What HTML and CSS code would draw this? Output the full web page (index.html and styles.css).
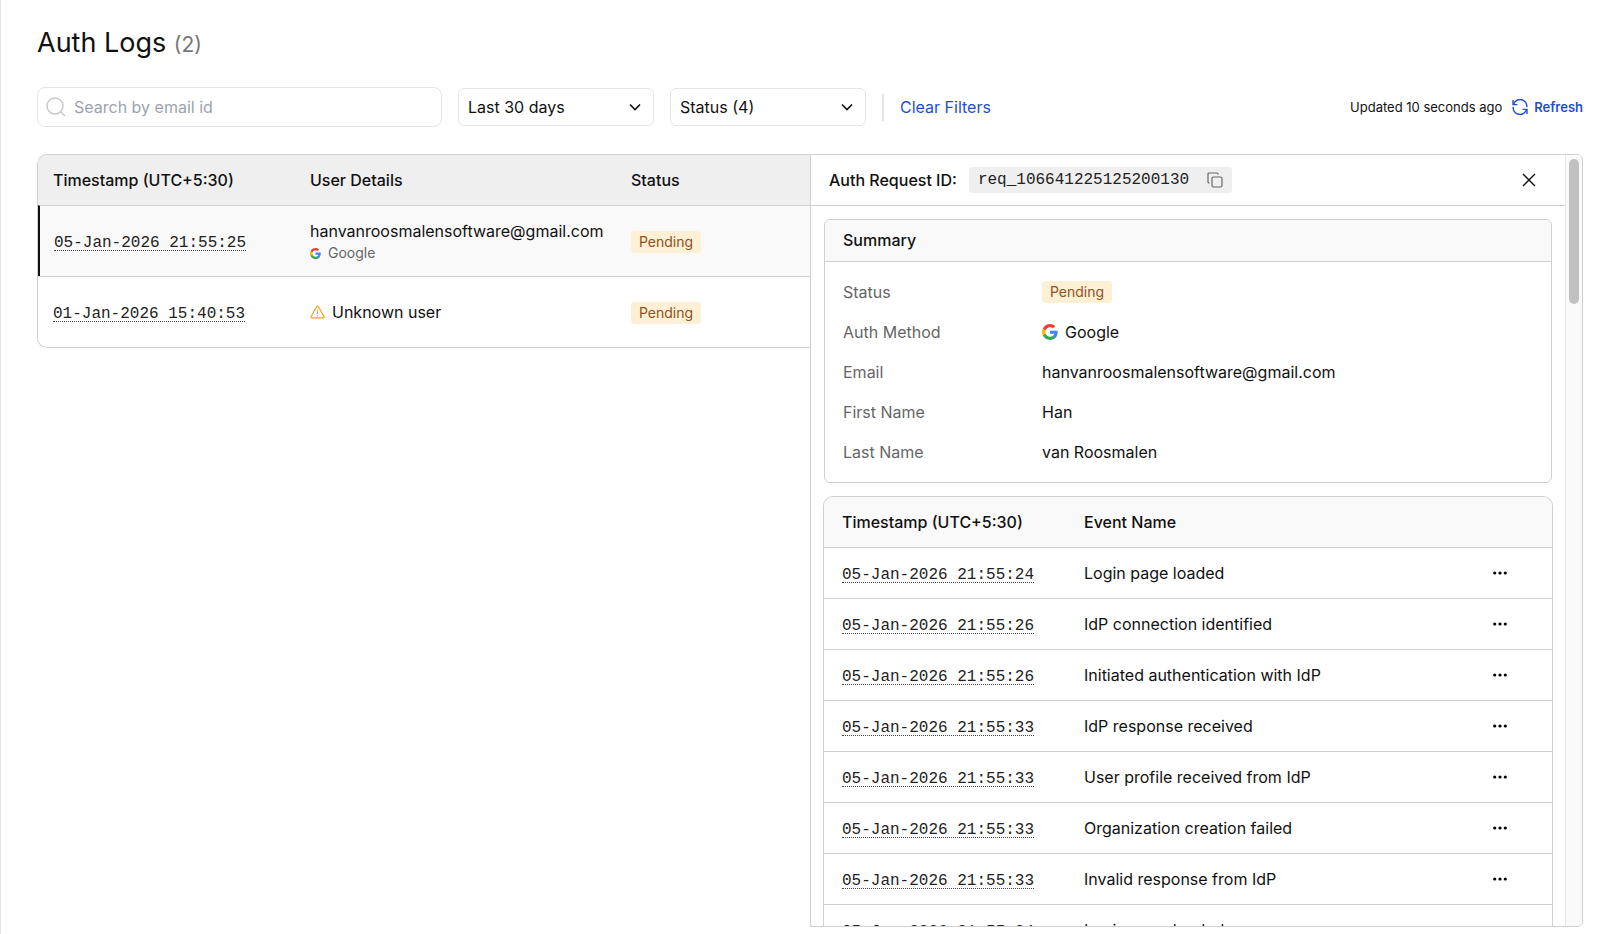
FILE: index.html
```html
<!DOCTYPE html>
<html lang="en">
<head>
    <meta charset="UTF-8">
    <meta name="viewport" content="width=device-width, initial-scale=1.0">
    <title>Auth Logs</title>
    <link rel="stylesheet" href="styles.css">
</head>
<body>
    <!-- shared icons -->
    <svg class="sprite" aria-hidden="true">
        <symbol id="icon-google" viewBox="0 0 48 48">
            <path fill="#4285f4" d="M47 24.500c0-1.600-.1-3.100-.4-4.500H24v9h12.900c-.6 3-2.300 5.500-4.800 7.200v6h7.700C44.300 38 47 31.800 47 24.500z"/>
            <path fill="#34a853" d="M24 48c6.500 0 11.900-2.100 15.900-5.800l-7.800-6c-2.100 1.400-4.900 2.300-8.100 2.300-6.200 0-11.500-4.200-13.400-9.900h-8v6.200C6.600 42.600 14.600 48 24 48z"/>
            <path fill="#fbbc05" d="M10.600 28.600c-.5-1.400-.8-3-.8-4.600s.3-3.200.8-4.600v-6.200h-8C1 16.500 0 20.100 0 24s1 7.500 2.600 10.800z"/>
            <path fill="#ea4335" d="M24 9.500c3.500 0 6.700 1.200 9.200 3.600l6.800-6.800C35.900 2.400 30.500 0 24 0 14.600 0 6.600 5.400 2.600 13.200l8 6.200C12.500 13.700 17.800 9.500 24 9.500z"/>
        </symbol>
        <symbol id="icon-chevron" viewBox="0 0 12 8">
            <path d="M1 1.500l5 5 5-5" fill="none" stroke="currentColor" stroke-width="1.600"/>
        </symbol>
        <symbol id="icon-dots" viewBox="0 0 16 4">
            <circle cx="2.700" cy="2" r="1.600"/><circle cx="8" cy="2" r="1.600"/><circle cx="13.300" cy="2" r="1.600"/>
        </symbol>
    </svg>

    <header class="page-header">
        <h1>Auth Logs <span class="count">(2)</span></h1>
    </header>

    <div class="toolbar">
        <label class="search">
            <svg class="search-icon" viewBox="0 0 20 20" aria-hidden="true"><circle cx="9" cy="9" r="8"/><path d="M15 15l4 4"/></svg>
            <input type="text" placeholder="Search by email id" aria-label="Search by email id">
        </label>
        <div class="select">
            <select aria-label="Date range"><option>Last 30 days</option></select>
            <svg class="chevron" aria-hidden="true"><use href="#icon-chevron"/></svg>
        </div>
        <div class="select">
            <select aria-label="Status"><option>Status (4)</option></select>
            <svg class="chevron" aria-hidden="true"><use href="#icon-chevron"/></svg>
        </div>
        <span class="divider"></span>
        <button class="clear-btn" type="button">Clear Filters</button>
        <div class="updated">
            <span>Updated 10 seconds ago</span>
            <button class="refresh-btn" type="button">
                <svg class="refresh-icon" viewBox="0 0 16 16" aria-hidden="true">
                    <path d="M1.600 5.200A6.800 6.800 0 0 1 14.800 8.200M14.400 10.800A6.800 6.800 0 0 1 1.200 7.800"/>
                    <path d="M1 1v4.600h4.400M15 15v-4.600h-4.400"/>
                </svg>
                Refresh
            </button>
        </div>
    </div>

    <main class="content">
        <table class="logs">
            <thead>
                <tr><th class="col-time">Timestamp (UTC+5:30)</th><th class="col-user">User Details</th><th>Status</th></tr>
            </thead>
            <tbody>
                <tr class="selected">
                    <td><span class="time">05-Jan-2026 21:55:25</span></td>
                    <td>
                        <div>hanvanroosmalensoftware@gmail.com</div>
                        <div class="provider"><svg class="google-sm" aria-hidden="true"><use href="#icon-google"/></svg>Google</div>
                    </td>
                    <td><span class="badge">Pending</span></td>
                </tr>
                <tr>
                    <td><span class="time">01-Jan-2026 15:40:53</span></td>
                    <td>
                        <div class="unknown">
                            <svg class="warning" viewBox="0 0 16 14" aria-hidden="true"><path d="M7.200 1.200L1 12a.9.9 0 0 0 .8 1.300h12.400A.9.9 0 0 0 15 12L8.800 1.200a.9.9 0 0 0-1.600 0zM8 5v4M8 10.300v1.200"/></svg>
                            Unknown user
                        </div>
                    </td>
                    <td><span class="badge">Pending</span></td>
                </tr>
            </tbody>
        </table>

        <section class="panel">
            <div class="panel-main">
                <div class="panel-header">
                    <span class="panel-title">Auth Request ID:</span>
                    <div class="request-id">
                        <code>req_106641225125200130</code>
                        <button class="icon-btn" type="button" aria-label="Copy request ID">
                            <svg class="copy-icon" viewBox="0 0 16 16" aria-hidden="true"><rect x="5" y="5" width="10" height="10" rx="1.500"/><path d="M2.500 11H2a1 1 0 0 1-1-1V2a1 1 0 0 1 1-1h8a1 1 0 0 1 1 1v.5"/></svg>
                        </button>
                    </div>
                    <button class="icon-btn close-btn" type="button" aria-label="Close">
                        <svg class="close-icon" viewBox="0 0 14 14" aria-hidden="true"><path d="M1 1l12 12M13 1L1 13"/></svg>
                    </button>
                </div>

                <div class="panel-body">
                    <div class="summary">
                        <h2>Summary</h2>
                        <dl>
                            <dt>Status</dt><dd><span class="badge">Pending</span></dd>
                            <dt>Auth Method</dt><dd><svg class="google" aria-hidden="true"><use href="#icon-google"/></svg>Google</dd>
                            <dt>Email</dt><dd>hanvanroosmalensoftware@gmail.com</dd>
                            <dt>First Name</dt><dd>Han</dd>
                            <dt>Last Name</dt><dd>van Roosmalen</dd>
                        </dl>
                    </div>

                    <table class="events">
                        <thead>
                            <tr><th class="col-time">Timestamp (UTC+5:30)</th><th>Event Name</th><th class="col-menu"></th></tr>
                        </thead>
                        <tbody id="event-rows"></tbody>
                    </table>
                </div>
            </div>
            <div class="scrollbar"><div class="thumb"></div></div>
        </section>
    </main>

    <script>
        const events = [
            ['05-Jan-2026 21:55:24', 'Login page loaded'],
            ['05-Jan-2026 21:55:26', 'IdP connection identified'],
            ['05-Jan-2026 21:55:26', 'Initiated authentication with IdP'],
            ['05-Jan-2026 21:55:33', 'IdP response received'],
            ['05-Jan-2026 21:55:33', 'User profile received from IdP'],
            ['05-Jan-2026 21:55:33', 'Organization creation failed'],
            ['05-Jan-2026 21:55:33', 'Invalid response from IdP'],
            ['05-Jan-2026 21:55:34', 'Login page loaded']
        ];

        document.getElementById('event-rows').innerHTML = events.map(([time, name]) => `
            <tr>
                <td><span class="time">${time}</span></td>
                <td>${name}</td>
                <td><button class="icon-btn" type="button" aria-label="More"><svg class="dots" aria-hidden="true"><use href="#icon-dots"/></svg></button></td>
            </tr>
        `).join('');
    </script>
</body>
</html>
```

FILE: styles.css
```css
* {
    box-sizing: border-box;
}

body {
    display: flex;
    flex-direction: column;
    height: 100vh;
    margin: 0;
    padding: 24px 17px 7px 36px;
    border-left: 1px solid #e5e5e5;
    background-color: #fff;
    color: #111;
    font-family: 'Inter', sans-serif;
    font-size: 16px;
    line-height: 24px;
    overflow: hidden;
}

button, input, select {
    font: inherit;
    color: inherit;
}

button {
    padding: 0;
    border: none;
    background: none;
    cursor: pointer;
}

svg {
    display: block;
    flex: none;
}

.sprite {
    position: absolute;
    width: 0;
    height: 0;
}

h1 {
    margin: 0;
    font-size: 27px;
    font-weight: 400;
    line-height: 37px;
}

.count {
    color: #777;
    font-size: 21px;
}

.toolbar {
    display: flex;
    align-items: center;
    gap: 16px;
    margin: 24px 0 27px;
}

.search {
    display: flex;
    align-items: center;
    gap: 8px;
    width: 405px;
    height: 40px;
    padding: 0 8px;
    border: 1px solid #e5e5e5;
    border-radius: 8px;
}

.search input {
    flex: 1;
    min-width: 0;
    padding: 0;
    border: none;
    outline: none;
    background: none;
}

.search input::placeholder {
    color: #9ca3af;
}

.search-icon {
    width: 20px;
    height: 20px;
    fill: none;
    stroke: #c8c8c8;
    stroke-width: 1.5;
}

.select {
    position: relative;
    width: 196px;
}

.select select {
    width: 100%;
    height: 38px;
    padding: 0 9px;
    border: 1px solid #e5e5e5;
    border-radius: 6px;
    background-color: #fff;
    appearance: none;
}

.chevron {
    position: absolute;
    top: 15px;
    right: 13px;
    width: 12px;
    height: 8px;
    pointer-events: none;
}

.divider {
    width: 2px;
    height: 27px;
    background-color: #e5e5e5;
}

.clear-btn {
    color: #1d4ed8;
}

.updated {
    display: flex;
    align-items: center;
    gap: 10px;
    margin-left: auto;
    font-size: 13px;
}

.refresh-btn {
    display: flex;
    align-items: center;
    gap: 6px;
    color: #1d4ed8;
    font-weight: 600;
}

.refresh-icon {
    width: 16px;
    height: 16px;
    fill: none;
    stroke: currentColor;
    stroke-width: 1.4;
}

.content {
    display: grid;
    grid-template-columns: 1fr 1fr;
    flex: 1;
    min-height: 0;
    align-items: start;
}

table {
    width: 100%;
    border: 1px solid #d0d0d0;
    border-collapse: separate;
    border-spacing: 0;
    table-layout: fixed;
}

th, td {
    padding: 0 16px;
    text-align: left;
}

th {
    height: 50px;
    font-weight: 500;
}

td {
    border-top: 1px solid #d0d0d0;
}

.time {
    display: inline-block;
    border-bottom: 1px dotted #444;
    color: #222;
    font-family: 'Liberation Mono', monospace;
    line-height: 14px;
}

.badge {
    display: inline-block;
    padding: 0 8px;
    border-radius: 4px;
    background-color: #fef0d4;
    color: #92501f;
    font-size: 14px;
    line-height: 22px;
}

.icon-btn {
    display: block;
}

/* logs table */
.logs {
    border-right: none;
    border-radius: 10px 0 0 10px;
    overflow: hidden;
}

.logs th {
    background-color: #efefef;
}

.logs th, .logs td {
    padding-left: 15px;
}

.logs td {
    height: 71px;
}

.logs .col-time {
    width: 257px;
}

.logs .col-user {
    width: 321px;
}

.logs .selected td {
    background-color: #f9f9f9;
}

.logs .selected td:first-child {
    padding-left: 14px;
    border-left: 2px solid #111;
}

.provider {
    display: flex;
    align-items: center;
    gap: 7px;
    color: #666;
    font-size: 14px;
    line-height: 20px;
}

.google-sm {
    width: 11px;
    height: 11px;
}

.google {
    width: 16px;
    height: 16px;
}

.unknown {
    display: flex;
    align-items: center;
    gap: 7px;
}

.warning {
    width: 15px;
    height: 14px;
    fill: none;
    stroke: #f59e0b;
    stroke-width: 1.2;
}

/* details panel */
.panel {
    display: flex;
    height: 100%;
    min-height: 0;
    border: 1px solid #d0d0d0;
    border-radius: 0 6px 6px 0;
    background-color: #fff;
    overflow: hidden;
}

.panel-main {
    display: flex;
    flex-direction: column;
    flex: 1;
    min-width: 0;
}

.panel-header {
    display: flex;
    align-items: center;
    flex: none;
    gap: 12px;
    height: 51px;
    padding: 0 29px 0 18px;
    border-bottom: 1px solid #d0d0d0;
}

.panel-title {
    font-weight: 500;
}

.request-id {
    display: flex;
    align-items: center;
    gap: 18px;
    height: 26px;
    padding: 0 9px;
    border-radius: 4px;
    background-color: #efefef;
}

.request-id code {
    color: #222;
    font-family: 'Liberation Mono', monospace;
}

.copy-icon {
    width: 16px;
    height: 16px;
    fill: none;
    stroke: #666;
    stroke-width: 1.2;
}

.close-btn {
    margin-left: auto;
}

.close-icon {
    width: 14px;
    height: 14px;
    stroke: #111;
    stroke-width: 1.4;
}

.panel-body {
    flex: 1;
    min-height: 0;
    padding: 13px 12px 0;
    overflow: hidden;
}

.summary {
    margin: 0 1px 13px;
    border: 1px solid #d0d0d0;
    border-radius: 6px;
    overflow: hidden;
}

.summary h2 {
    margin: 0;
    padding: 8px 18px 9px;
    border-bottom: 1px solid #d0d0d0;
    background-color: #f9f9f9;
    font-size: 16px;
    font-weight: 500;
}

.summary dl {
    display: grid;
    grid-template-columns: 199px 1fr;
    row-gap: 16px;
    margin: 0;
    padding: 18px;
}

.summary dt {
    color: #666;
}

.summary dd {
    display: flex;
    align-items: center;
    gap: 7px;
    margin: 0;
}

.events {
    border-radius: 10px;
    overflow: hidden;
}

.events th {
    background-color: #f9f9f9;
}

.events th, .events td {
    padding-left: 18px;
}

.events td {
    height: 51px;
}

.events .col-time {
    width: 242px;
}

.events .col-menu {
    width: 78px;
}

.dots {
    width: 16px;
    height: 4px;
}

.scrollbar {
    width: 17px;
    padding: 4px 3px;
    border-left: 1px solid #e8e8e8;
    background-color: #fafafa;
}

.thumb {
    height: 19%;
    border-radius: 5px;
    background-color: #c1c1c1;
}
```
